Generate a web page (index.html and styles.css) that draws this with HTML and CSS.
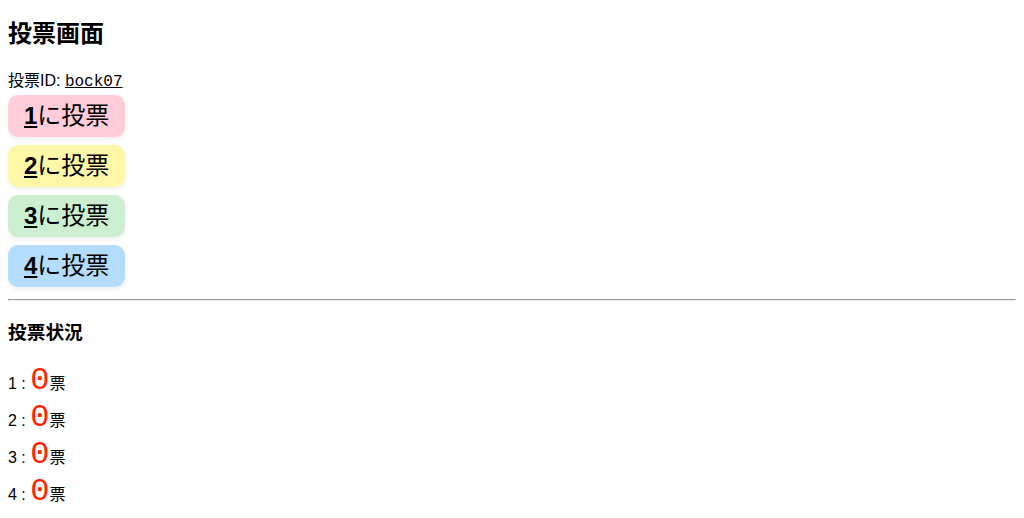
FILE: index.html
```html
<!DOCTYPE html>
<html lang="ja">
<head>
    <meta charset="UTF-8">
    <meta name="viewport" content="width=device-width, initial-scale=1.0">
    <title>投票画面</title>
    <link rel="stylesheet" href="styles.css">
</head>
<body>
    <h2>投票画面</h2>
    <div class="vote-id">投票ID: <u><code>bock07</code></u></div>

    <div class="vote-buttons">
        <button class="vote-btn btn-1"><b><u>1</u></b>に投票</button>
        <button class="vote-btn btn-2"><b><u>2</u></b>に投票</button>
        <button class="vote-btn btn-3"><b><u>3</u></b>に投票</button>
        <button class="vote-btn btn-4"><b><u>4</u></b>に投票</button>
    </div>

    <hr>

    <h3>投票状況</h3>
    <div class="results">
        <div class="result-row">1 : <span class="count">0</span>票</div>
        <div class="result-row">2 : <span class="count">0</span>票</div>
        <div class="result-row">3 : <span class="count">0</span>票</div>
        <div class="result-row">4 : <span class="count">0</span>票</div>
    </div>
</body>
</html>
```

FILE: styles.css
```css
body {
    font-family: 'Liberation Sans', Arial, 'Noto Sans CJK JP', sans-serif;
    font-size: 16px;
    margin: 8px;
    color: #000;
    background-color: #fff;
}

h2 {
    font-size: 24px;
    line-height: 28px;
    margin: 12px 0 24px;
}

h3 {
    font-size: 18.72px;
    line-height: 21.5px;
    margin: 20.6px 0 18px;
}

.vote-id {
    line-height: 18.4px;
}

code {
    font-family: 'Liberation Mono', 'Courier New', monospace;
    font-size: 16px;
}

.vote-buttons {
    display: flex;
    flex-direction: column;
    align-items: flex-start;
    gap: 8px;
    margin-top: 4px;
}

.vote-btn {
    font-family: 'Liberation Sans', Arial, 'Noto Sans CJK JP', sans-serif;
    font-size: 24px;
    line-height: 28px;
    color: #000;
    padding: 7px 16px;
    border: none;
    border-radius: 10px;
    box-shadow: 0 2px 5px rgba(0, 0, 0, 0.08);
    cursor: pointer;
}

.btn-1 { background-color: #ffccd9; }
.btn-2 { background-color: #fff7a8; }
.btn-3 { background-color: #ccefd2; }
.btn-4 { background-color: #b3dcfd; }

hr {
    margin: 12px 0 0;
}

.result-row {
    height: 37px;
}

.count {
    font-family: 'Liberation Mono', 'Courier New', monospace;
    font-size: 32px;
    color: #ff2200;
}
```
